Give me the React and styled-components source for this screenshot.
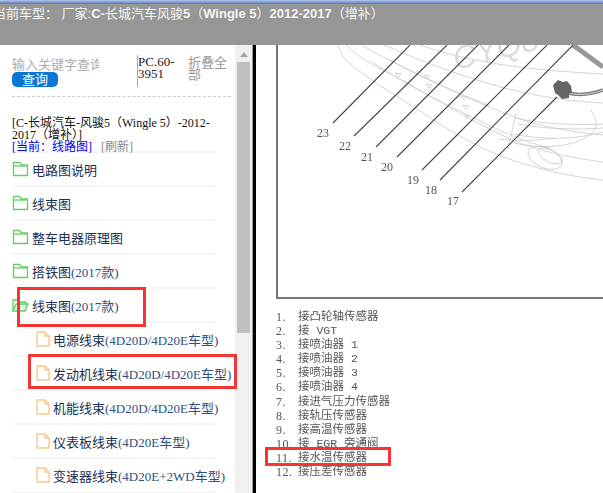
import React from 'react'
import styled, { createGlobalStyle } from 'styled-components'

const SERIF = `"Liberation Serif", "Noto Sans CJK SC", serif`

const rows = [
  { label: '电路图说明' },
  { label: '线束图' },
  { label: '整车电器原理图' },
  { label: '搭铁图', note: '(2017款)' },
  { label: '线束图', note: '(2017款)', open: true },
  { label: '电源线束', note: '(4D20D/4D20E车型)', child: true },
  { label: '发动机线束', note: '(4D20D/4D20E车型)', child: true },
  { label: '机能线束', note: '(4D20D/4D20E车型)', child: true },
  { label: '仪表板线束', note: '(4D20E车型)', child: true },
  { label: '变速器线束', note: '(4D20E+2WD车型)', child: true },
]

const legend = [
  ['1.', '接凸轮轴传感器'],
  ['2.', '接 VGT'],
  ['3.', '接喷油器 1'],
  ['4.', '接喷油器 2'],
  ['5.', '接喷油器 3'],
  ['6.', '接喷油器 4'],
  ['7.', '接进气压力传感器'],
  ['8.', '接轨压传感器'],
  ['9.', '接高温传感器'],
  ['10.', '接 EGR 旁通阀'],
  ['11.', '接水温传感器'],
  ['12.', '接压差传感器'],
]

const leaders = [
  [333, 123, 410, 45, '23', 323, 137],
  [354, 136, 447, 45, '22', 345, 150],
  [376, 147, 478, 45, '21', 367, 161],
  [397, 157, 509, 45, '20', 387, 171],
  [422, 170, 547, 45, '19', 413, 184],
  [440, 180, 573, 45, '18', 431, 194],
  [462, 192, 557, 97, '17', 453, 205],
]

const FolderIcon = ({ open }) => (
  <TreeIcon width="17" height="16" viewBox="0 0 17 16" fill="none" stroke="#62cf62" strokeWidth="1.3">
    {open ? (
      <>
        <path d="M1 14V3h5l2 2h6v2" />
        <path d="M1 14l3-7h12l-3 7z" fill="#62cf62" fillOpacity="0.2" />
      </>
    ) : (
      <>
        <path d="M1.5 14.5V1.5h6l2 2.5h6v10.500z" strokeLinejoin="round" />
        <path d="M1.500 5h14" />
      </>
    )}
  </TreeIcon>
)

const FileIcon = () => (
  <TreeIcon width="14" height="16" viewBox="0 0 14 16" fill="none" stroke="#fbc78b" strokeWidth="1.4">
    <path d="M1 1h8l4 4v10H1z" strokeLinejoin="round" />
    <path d="M9 1v4h4" />
  </TreeIcon>
)

const Diagram = () => (
  <DiagramSvg viewBox="278 45 325 253">
    <g fill="none" stroke="#c9c9c9" strokeWidth="0.8">
      <path d="M338 45c4 14 12 20 24 28 24 18 50 32 76 50 26 16 54 32 90 42 26 8 48 12 75 15" />
      <path d="M346 45c14 14 34 24 56 35 38 22 72 42 110 60 30 12 60 18 91 22" />
      <path d="M362 45c22 14 50 26 78 40 30 14 62 28 92 38 24 6 48 10 71 12" />
      <path d="M384 45c28 12 58 24 90 34 42 14 86 22 129 24" />
      <path d="M420 45c40 14 88 24 183 29" />
      <path d="M372 62c30 20 64 38 98 54 28 14 54 26 80 32" />
      <path d="M390 60c32 18 66 32 100 46" />
      <path d="M515 118c16 4 50 8 88 6M518 124c26 5 60 6 85 4M513 134c30 6 62 6 90 -2" />
      <path d="M516 113l-8 36M498 139c18 2 36 2 56-1" />
      <path d="M590 109c6 8 8 16 4 22-12 14-46 20-80 12" />
      <ellipse cx="545" cy="158" rx="18" ry="10" transform="rotate(22 545 158)" />
      <ellipse cx="550" cy="156" rx="13" ry="6" transform="rotate(28 550 156)" />
      <path d="M395 73l3 4 3-3zM424 75l3 4 3-3zM426 84l3 4 3-3zM461 96l3 4 3-3zM463 105l3 4 3-3zM464 115l3 4 3-3z" />
    </g>
    <Watermark x="456" y="70" transform="rotate(-14 456 70)">CYQ8</Watermark>
    <path d="M573 45l30 22" stroke="#999" strokeWidth="5" fill="none" />
    <path d="M568 93c12 3 24 1 35-3" stroke="#777" strokeWidth="3.500" fill="none" />
    <path d="M568 93c12 3 24 1 35-3" stroke="#ddd" strokeWidth="1" fill="none" />
    <path d="M553 85l5-5 5 2 4-1 4 5 1 6-3 2 0 4-7 1-4-4-3-2z" fill="#666" />
    <g stroke="#444" strokeWidth="1.100">
      {leaders.map(([x1, y1, x2, y2]) => (
        <line key={x1} x1={x1} y1={y1} x2={x2} y2={y2} />
      ))}
    </g>
    {leaders.map(([, , , , num, x, y]) => (
      <CalloutNumber key={num} x={x} y={y}>{num}</CalloutNumber>
    ))}
  </DiagramSvg>
)

const App = () => (
  <Page>
    <GlobalStyle />
    <Header>
      <HeaderStrip />
      <HeaderTitle>
        当前车型： 厂家:<b>C-</b>长城汽车风骏<b>5</b>（<b>Wingle 5</b>）<b>2012-2017</b>（增补）
      </HeaderTitle>
    </Header>
    <Body>
      <Sidebar>
        <Toolbar>
          <SearchBox>
            <SearchInput placeholder="输入关键字查询" readOnly />
            <SearchButton>查询</SearchButton>
          </SearchBox>
          <PageCode>PC.60-3951</PageCode>
          <CollapseAll>折叠全部</CollapseAll>
        </Toolbar>
        <Status>
          <div>[C-长城汽车-风骏5（Wingle 5）-2012-2017（增补）]</div>
          <div>
            <CurrentLink>[当前：线路图]</CurrentLink> <RefreshLink>[刷新]</RefreshLink>
          </div>
        </Status>
        <TreeList>
          {rows.map((row, i) => (
            <TreeRow key={i} $child={row.child}>
              {row.child ? <FileIcon /> : <FolderIcon open={row.open} />}
              <span>
                {row.label}
                {row.note && <TreeNote>{row.note}</TreeNote>}
              </span>
            </TreeRow>
          ))}
        </TreeList>
      </Sidebar>
      <ScrollTrack>
        <ScrollArrow />
        <ScrollThumb />
      </ScrollTrack>
      <Divider />
      <Viewer>
        <ImageFrame>
          <Diagram />
        </ImageFrame>
        <Legend>
          {legend.map(([num, text]) => (
            <LegendRow key={num}>
              <LegendNum>{num}</LegendNum>
              <span>{text}</span>
            </LegendRow>
          ))}
        </Legend>
      </Viewer>
    </Body>
    <RedBox $x={17} $y={287} $w={129} $h={40} />
    <RedBox $x={28} $y={354} $w={209} $h={35} />
    <RedBox $x={265} $y={447} $w={126} $h={19} />
  </Page>
)

const GlobalStyle = createGlobalStyle`
  html, body {
    margin: 0;
    padding: 0;
    background: #fff;
  }
`

const Page = styled.div`
  position: relative;
  width: 603px;
  height: 493px;
  overflow: hidden;
  display: flex;
  flex-direction: column;
  font-family: ${SERIF};
  font-size: 13px;
`

const Header = styled.div`
  flex: none;
  height: 45px;
  background: #969696;
  overflow: hidden;
`

const HeaderStrip = styled.div`
  height: 4px;
  background: linear-gradient(#b4c8ea, #4d75bd);
`

const HeaderTitle = styled.div`
  margin-left: -7px;
  font-family: "Liberation Sans", "Noto Sans CJK SC", sans-serif;
  font-size: 13px;
  line-height: 20px;
  color: #f4f4f4;
  white-space: nowrap;
`

const Body = styled.div`
  flex: 1;
  display: flex;
  min-height: 0;
`

const Sidebar = styled.div`
  flex: none;
  width: 235px;
  box-sizing: border-box;
  padding: 0 4px 0 12px;
  overflow: hidden;
`

const Toolbar = styled.div`
  height: 52px;
  box-sizing: border-box;
  padding-top: 10px;
  border-bottom: 1px dashed #ccc;
  display: flex;
  align-items: flex-start;
`

const SearchBox = styled.div`
  width: 125px;
  margin-top: 2px;
  flex: none;
  display: flex;
  flex-direction: column;
`

const SearchInput = styled.input`
  width: 87px;
  height: 15px;
  padding: 0;
  border: 0;
  outline: 0;
  background: transparent;
  font-family: ${SERIF};
  font-size: 13px;
  line-height: 15px;
  &::placeholder {
    color: #adadad;
    opacity: 1;
  }
`

const SearchButton = styled.div`
  width: 46px;
  height: 15px;
  background: #0a78d2;
  border-radius: 5px;
  color: #fff;
  line-height: 15px;
  text-align: center;
`

const PageCode = styled.div`
  width: 51px;
  height: 32px;
  flex: none;
  box-sizing: border-box;
  padding-top: 1px;
  border-left: 1px solid #aaa;
  line-height: 12px;
  color: #222;
`

const CollapseAll = styled.div`
  width: 40px;
  flex: none;
  padding-top: 2px;
  line-height: 12px;
  color: #999;
`

const Status = styled.div`
  height: 54px;
  width: 200px;
  box-sizing: border-box;
  padding-top: 20px;
  font-size: 12px;
  line-height: 12px;
  color: #111;
`

const CurrentLink = styled.span`
  color: #0000ee;
`

const RefreshLink = styled.span`
  margin-left: 6px;
  color: #888;
`

const TreeList = styled.div`
  width: 203px;
  border-top: 2px solid #f5f5f5;
`

const TreeRow = styled.div`
  height: 32px;
  display: flex;
  align-items: center;
  gap: 3px;
  padding-left: ${(p) => (p.$child ? '24px' : '0')};
  border-bottom: 2px solid #f5f5f5;
  color: #1b2f52;
  white-space: nowrap;

  span {
    flex: none;
  }
`

const TreeIcon = styled.svg`
  flex: none;
`

const TreeNote = styled.span`
  color: #2f4f80;
`

const ScrollTrack = styled.div`
  flex: none;
  width: 17px;
  background: #f0f0f0;
  padding: 0 2px;
  box-sizing: border-box;
`

const ScrollArrow = styled.div`
  width: 0;
  height: 0;
  margin: 7px auto 5px;
  border-left: 4px solid transparent;
  border-right: 4px solid transparent;
  border-bottom: 5px solid #a3a3a3;
`

const ScrollThumb = styled.div`
  height: 271px;
  background: #c0c0c0;
`

const Divider = styled.div`
  flex: none;
  width: 4px;
  background: #000;
  border-left: 1px solid #999;
  box-sizing: border-box;
`

const Viewer = styled.div`
  flex: 1;
  min-width: 0;
  padding-left: 20px;
  display: flex;
  flex-direction: column;
`

const ImageFrame = styled.div`
  height: 254px;
  box-sizing: border-box;
  border-left: 2px solid #777;
  border-bottom: 2px solid #777;
  overflow: hidden;
`

const DiagramSvg = styled.svg`
  display: block;
  width: 325px;
  height: 253px;
  filter: blur(0.35px);
`

const Watermark = styled.text`
  font-family: "Liberation Sans", sans-serif;
  font-size: 32px;
  font-style: italic;
  fill: #dcdcdc;
`

const CalloutNumber = styled.text`
  font-family: "Liberation Serif", serif;
  font-size: 12px;
  fill: #555;
  text-anchor: middle;
`

const Legend = styled.div`
  margin-top: 11px;
  filter: blur(0.45px);
  color: #555;
  font-family: "Liberation Mono", "Noto Sans CJK SC", monospace;
  font-size: 11.500px;
  line-height: 14.100px;
`

const LegendRow = styled.div`
  display: flex;
  white-space: nowrap;
`

const LegendNum = styled.span`
  width: 22px;
  flex: none;
  font-family: "Liberation Serif", serif;
  font-size: 12px;
  letter-spacing: 0.5px;
`

const RedBox = styled.div`
  position: absolute;
  left: ${(p) => p.$x}px;
  top: ${(p) => p.$y}px;
  width: ${(p) => p.$w}px;
  height: ${(p) => p.$h}px;
  box-sizing: border-box;
  border: 3px solid #f53535;
`

export default App
